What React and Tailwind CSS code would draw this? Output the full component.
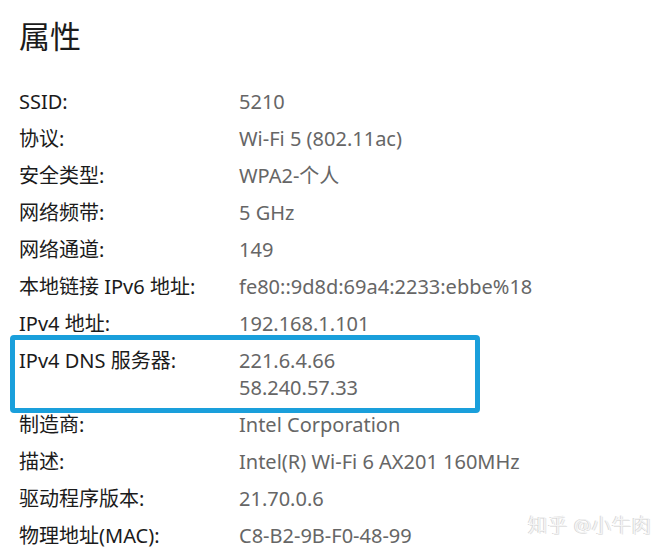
const rows = [
  { label: "SSID:", values: ["5210"] },
  { label: "协议:", values: ["Wi-Fi 5 (802.11ac)"] },
  { label: "安全类型:", values: ["WPA2-个人"] },
  { label: "网络频带:", values: ["5 GHz"] },
  { label: "网络通道:", values: ["149"] },
  { label: "本地链接 IPv6 地址:", values: ["fe80::9d8d:69a4:2233:ebbe%18"] },
  { label: "IPv4 地址:", values: ["192.168.1.101"] },
  { label: "IPv4 DNS 服务器:", values: ["221.6.4.66", "58.240.57.33"], highlight: true },
  { label: "制造商:", values: ["Intel Corporation"] },
  { label: "描述:", values: ["Intel(R) Wi-Fi 6 AX201 160MHz"] },
  { label: "驱动程序版本:", values: ["21.70.0.6"] },
  { label: "物理地址(MAC):", values: ["C8-B2-9B-F0-48-99"] },
]

export default function App() {
  return (
    <div
      className="relative w-[671px] h-[557px] overflow-hidden bg-white pl-[19px] pt-[14px]"
      style={{ fontFamily: '"Noto Sans", "Noto Sans CJK SC", sans-serif' }}
    >
      <h1 className="text-[31px] leading-[44px] text-[#1b1b1b]">属性</h1>

      <div className="mt-[30px] flex flex-col gap-[10px]">
        {rows.map((row) => (
          <div key={row.label} className="relative flex text-[20px] leading-[27px]">
            {row.highlight && (
              <div className="absolute left-[-9px] top-[-12px] w-[470px] h-[78px] rounded-[4px] border-[5px] border-[#1a9fdb]" />
            )}
            <div className="w-[220px] shrink-0 text-[#1b1b1b]">{row.label}</div>
            <div className="flex flex-col text-[#666666]">
              {row.values.map((v) => (
                <span key={v}>{v}</span>
              ))}
            </div>
          </div>
        ))}
      </div>

      {/* watermark */}
      <div className="absolute left-[528px] top-[513px] text-[19px] font-light leading-[24px] tracking-[1px] text-[#f4f4f4] [text-shadow:-1px_0_0_#d2d2d2,1px_1px_0_#e2e2e2]">
        知乎 @小牛肉
      </div>
    </div>
  )
}
